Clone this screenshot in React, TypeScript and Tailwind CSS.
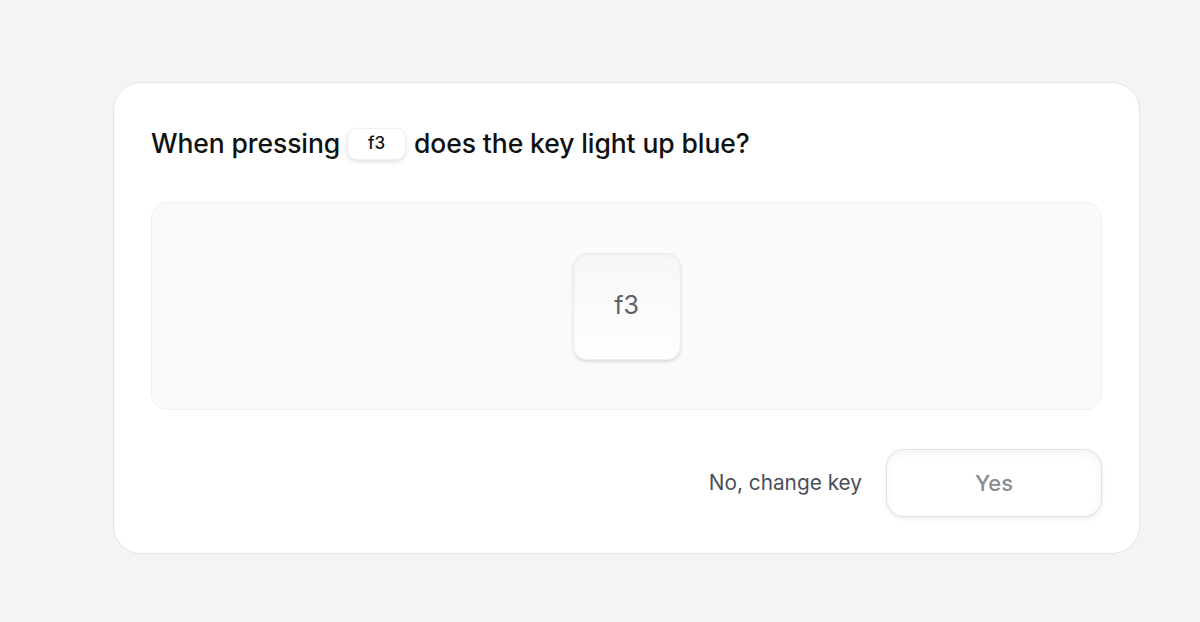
export default function App() {
    return (
        <div className="min-h-[622px] w-full bg-[#f4f4f6] pt-[82px] pl-[113px] font-['Inter',sans-serif]">
            {/* CARD */}
            <div className="w-[1027px] h-[472px] bg-white rounded-[28px] border border-[#e4e4e9] px-[37px] pt-[37px] pb-[35px] flex flex-col">
                {/* TITLE */}
                <div className="h-[48px] flex items-center text-[26.5px] font-medium tracking-[-0.1px] text-[#111111]">
                    <span>When pressing</span>
                    <kbd className="ml-[7px] mr-[8px] h-[32px] w-[59px] flex items-center justify-center rounded-[10px] bg-white border border-[#eeeeef] shadow-[0_2px_4px_rgba(0,0,0,0.12)] text-[17px] font-medium font-['Inter',sans-serif] text-[#111111]">
                        f3
                    </kbd>
                    <span>does the key light up blue?</span>
                </div>

                {/* KEY PANEL */}
                <div className="mt-[34px] h-[208px] rounded-[16px] bg-[#f9fafb] border border-[#f0f1f3] flex items-center justify-center">
                    <div className="h-[107px] w-[108px] rounded-[14px] bg-gradient-to-b from-[#f7f7f7] to-[#fefefe] border border-[#ececee] shadow-[0_2px_3px_rgba(0,0,0,0.12),inset_0_2px_3px_rgba(0,0,0,0.03)] flex items-center justify-center text-[25px] text-[#5f5f63]">
                        f3
                    </div>
                </div>

                {/* ACTIONS */}
                <div className="mt-[39px] flex items-center justify-end gap-[24px]">
                    <button className="text-[20.8px] text-[#4a4f5a]">No, change key</button>
                    <button className="h-[68px] w-[216px] rounded-[18px] bg-white border border-[#dfe1e6] shadow-[0_2px_4px_rgba(0,0,0,0.08),inset_0_3px_8px_rgba(0,0,0,0.05)] text-[22px] font-medium text-[#8b8b8f]">
                        Yes
                    </button>
                </div>
            </div>
        </div>
    );
}
